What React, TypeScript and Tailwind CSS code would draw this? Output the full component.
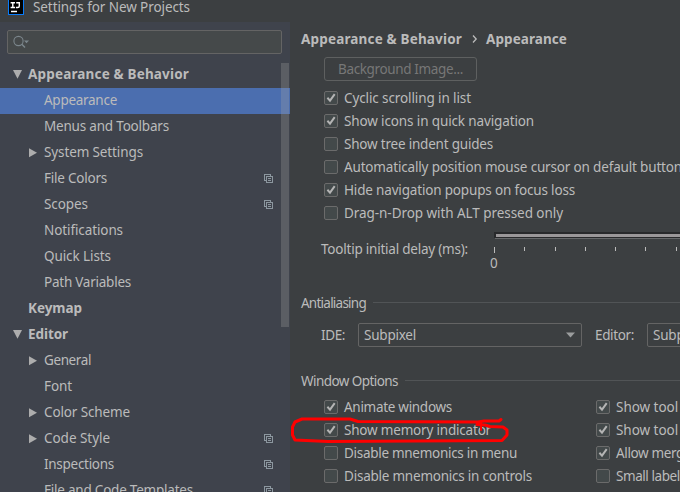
import React, { useLayoutEffect, useRef, useState } from "react";

/* A run of text whose tracking is adjusted so that it spans `w` pixels. */
function Label({ children, w, className = "" }: { children: string; w: number; className?: string }) {
  const ref = useRef<HTMLSpanElement>(null);
  const [spacing, setSpacing] = useState(0);
  useLayoutEffect(() => {
    const width = ref.current!.getBoundingClientRect().width;
    setSpacing((w - width) / children.length);
  }, [children, w]);
  return (
    <span ref={ref} className={`shrink-0 whitespace-pre ${className}`} style={{ letterSpacing: spacing }}>
      {children}
    </span>
  );
}

type Row = { text: string; w: number; level: 0 | 1; arrow?: "open" | "closed"; copy?: boolean; selected?: boolean };

const rows: Row[] = [
  { text: "Appearance & Behavior", w: 161, level: 0, arrow: "open" },
  { text: "Appearance", w: 73, level: 1, selected: true },
  { text: "Menus and Toolbars", w: 125, level: 1 },
  { text: "System Settings", w: 99, level: 1, arrow: "closed" },
  { text: "File Colors", w: 63, level: 1, copy: true },
  { text: "Scopes", w: 44, level: 1, copy: true },
  { text: "Notifications", w: 79, level: 1 },
  { text: "Quick Lists", w: 67, level: 1 },
  { text: "Path Variables", w: 87, level: 1 },
  { text: "Keymap", w: 54, level: 0 },
  { text: "Editor", w: 40, level: 0, arrow: "open" },
  { text: "General", w: 47, level: 1, arrow: "closed" },
  { text: "Font", w: 28, level: 1 },
  { text: "Color Scheme", w: 86, level: 1, arrow: "closed" },
  { text: "Code Style", w: 66, level: 1, arrow: "closed", copy: true },
  { text: "Inspections", w: 70, level: 1, copy: true },
  { text: "File and Code Templates", w: 149, level: 1, copy: true },
];

function Arrow({ kind }: { kind?: "open" | "closed" }) {
  return (
    <svg width="16" height="10" viewBox="0 0 16 10" className="shrink-0" fill="#adadad">
      {kind === "open" && <path d="M1 0H10L5.5 8.7Z" />}
      {kind === "closed" && <path d="M1 .3V9.3L9 4.8Z" />}
    </svg>
  );
}

function CopyIcon() {
  return (
    <svg width="9" height="9" viewBox="0 0 9 9" fill="none" stroke="#8c979f" shapeRendering="crispEdges">
      <path d="M2 6.5H.5V.5H6.5V2M2.5 2.5H8.5V8.5H2.5ZM4 4.5H7M4 6.5H7" />
    </svg>
  );
}

function TreeRow({ row }: { row: Row }) {
  return (
    <div className={`flex h-[26px] shrink-0 items-center ${row.level ? "pl-7" : "pl-3"} ${row.selected ? "bg-[#4b6eaf]" : ""}`}>
      <Arrow kind={row.arrow} />
      <Label w={row.w} className={row.level ? "mb-0.5" : "mb-0.5 font-bold"}>{row.text}</Label>
      {row.copy && <span className="mr-[17px] mb-px ml-auto"><CopyIcon /></span>}
    </div>
  );
}

function Check({ text, w, on }: { text: string; w: number; on?: boolean }) {
  return (
    <div className="flex h-[23px] items-center gap-1.5 pb-px">
      <span className="flex size-3.5 shrink-0 items-center justify-center rounded-[2px] border border-[#6b6b6b] bg-[#43494a]">
        {on && (
          <svg width="12" height="12" viewBox="0 0 12 12" className="shrink-0" fill="none" stroke="#b4b4b4" strokeWidth="2">
            <path d="M2.4 5.8L5 8.6L9.7 2.2" />
          </svg>
        )}
      </span>
      <Label w={w}>{text}</Label>
    </div>
  );
}

function Section({ text, w }: { text: string; w: number }) {
  return (
    <div className="flex h-5 items-center gap-[7px]">
      <Label w={w}>{text}</Label>
      <span className="mb-px h-px flex-1 bg-[#515456]" />
    </div>
  );
}

function Combo({ className }: { className: string }) {
  return (
    <div className={`flex h-6 shrink-0 items-center justify-between rounded-[2px] border border-[#646464] pr-1.5 pl-[5px] ${className}`}>
      <Label w={52}>Subpixel</Label>
      <svg width="9" height="6" viewBox="0 0 9 6" fill="#9b9d9e"><path d="M0 .5H9L4.5 5.5Z" /></svg>
    </div>
  );
}

export default function App() {
  return (
    <div className="relative flex h-[492px] w-[680px] flex-col overflow-hidden bg-[#3c3f41] font-['Noto_Sans',sans-serif] text-[13.5px] leading-5 text-[#bbbbbb]">
      <header className="flex h-[22px] shrink-0 items-start">
        <svg width="16" height="15" viewBox="0 0 16 15" className="ml-2 shrink-0">
          <path fill="#087cfa" d="M0 0H16V15H0Z" />
          <path fill="#000" d="M1 0H15V14H1Z" />
          <path stroke="#fff" strokeWidth="1.4" fill="none" d="M2.600 2.700H7M4.800 2.700V7.500M2.600 7.500H7M8.200 2.700H11.300V6Q11.300 7.500 9.800 7.500H7.900M3 11.500H9" />
        </svg>
        <span className="-mt-[3px] ml-[9px]"><Label w={157}>Settings for New Projects</Label></span>
      </header>

      <div className="flex min-h-0 flex-1">
        <aside className="flex w-[290px] shrink-0 flex-col bg-[#3f434c]">
          <div className="mx-[7px] mt-2 mb-2 flex h-6 w-[275px] shrink-0 items-center rounded-[2px] border border-[#646464] bg-[#45494a] pl-[5px]">
            <svg width="17" height="14" viewBox="0 0 17 14" fill="none" stroke="#7b868c" strokeWidth="1.1">
              <circle cx="5.500" cy="6" r="4.600" />
              <path d="M8.800 9.300L12 12.500" strokeWidth="1.5" />
              <path d="M11 5.500H16L13.500 8.200Z" fill="#7b868c" stroke="none" />
            </svg>
          </div>
          <div className="relative flex min-h-0 flex-1 flex-col overflow-hidden">
            {rows.map((row, i) => <TreeRow key={i} row={row} />)}
            <div className="absolute top-px right-[1px] h-[264px] w-2 bg-[#a6a6a6]/28" />
          </div>
        </aside>

        <main className="flex w-[390px] shrink-0 flex-col overflow-hidden pl-[11px]">
          <div className="mt-[7px] flex h-5 shrink-0 items-center font-bold">
            <Label w={161}>Appearance &amp; Behavior</Label>
            <svg width="24" height="10" viewBox="0 0 24 10" className="shrink-0" fill="none" stroke="#bbb" strokeWidth="1.3">
              <path d="M11 1.500L14.200 5L11 8.500" />
            </svg>
            <Label w={81}>Appearance</Label>
          </div>

          <div className="mt-2 ml-[23px] flex h-6 w-[153px] shrink-0 items-center justify-center rounded-[3px] border border-[#5e6060] text-[#777777]">
            <Label w={125}>Background Image...</Label>
          </div>

          <div className="mt-1.5 ml-[23px] flex shrink-0 flex-col">
            <Check on text="Cyclic scrolling in list" w={127} />
            <Check on text="Show icons in quick navigation" w={190} />
            <Check text="Show tree indent guides" w={149} />
            <Check text="Automatically position mouse cursor on default button" w={338} />
            <Check on text="Hide navigation popups on focus loss" w={231} />
            <Check text="Drag-n-Drop with ALT pressed only" w={219} />
          </div>

          <div className="flex h-[58px] shrink-0 pl-5">
            <div className="mt-[14px] w-[169px] shrink-0"><Label w={147}>Tooltip initial delay (ms):</Label></div>
            <div className="flex flex-col">
              <svg width="190" height="30" viewBox="0 0 190 30" className="mt-[7px] shrink-0" shapeRendering="crispEdges">
                <path fill="#28292b" d="M4 0H190V6H4Z" />
                <path fill="#9a9799" d="M6 2H190V5H6Z" />
                <path fill="#66686a" d="M5 6H190V7H5Z" />
                <path stroke="#bbbbbb" d="M4.500 15V21M34.500 15V19M65.500 15V19M95.500 15V19M125.500 15V19M155.500 15V19M186.500 15V19" />
              </svg>
              <span className="-mt-[9px]"><Label w={8}>0</Label></span>
            </div>
          </div>

          <div className="mt-[10px]"><Section text="Antialiasing" w={65} /></div>
          <div className="mt-[10px] flex h-6 shrink-0 items-center pl-5">
            <div className="w-[37px] shrink-0"><Label w={24}>IDE:</Label></div>
            <Combo className="w-[224px]" />
            <div className="ml-[13px] w-[52px] shrink-0"><Label w={39}>Editor:</Label></div>
            <Combo className="w-[224px]" />
          </div>

          <div className="mt-6"><Section text="Window Options" w={97} /></div>
          <div className="mt-[5px] ml-[23px] flex shrink-0">
            <div className="w-[272px] shrink-0">
              <Check on text="Animate windows" w={108} />
              <Check on text="Show memory indicator" w={147} />
              <Check text="Disable mnemonics in menu" w={173} />
              <Check text="Disable mnemonics in controls" w={188} />
            </div>
            <div className="shrink-0">
              <Check on text="Show tool window bars" w={146} />
              <Check on text="Show tool window numbers" w={175} />
              <Check on text="Allow merging buttons" w={137} />
              <Check text="Small labels in editor tabs" w={151} />
            </div>
          </div>
        </main>
      </div>

      {/* Freehand marker loop round the memory indicator option */}
      <svg width="222" height="30" viewBox="290 415 222 30" className="absolute top-[415px] left-[290px]" fill="none" stroke="#ff0000" strokeWidth="3" strokeLinecap="round" strokeLinejoin="round">
        <path d="M501 419.500L499 421L484 421L478 422L358 421.500L350 419L302 419L295 422L292.500 427V435L295 440L328 441.500L502 440.500L507 435V430L503 427L490 426.500L485 425L477 424.500" />
        <path d="M481 423V430" strokeWidth="2" />
      </svg>
    </div>
  );
}
